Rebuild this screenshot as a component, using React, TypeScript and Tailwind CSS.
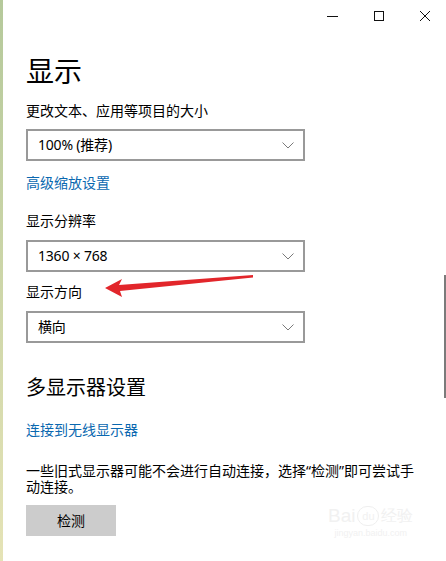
// Windows 10 设置 — 显示 page
const font = "font-['Noto_Sans','Noto_Sans_CJK_SC',sans-serif]";

function Chevron() {
  return (
    <svg width="12" height="7" viewBox="0 0 12 7" className="shrink-0">
      <path d="M0.5 0.5 L6 6 L11.5 0.5" fill="none" stroke="#7a7a7a" strokeWidth="1" />
    </svg>
  );
}

function Select({ value }: { value: string }) {
  return (
    <div className="flex h-[32px] w-[279px] items-center justify-between border-2 border-[#999999] bg-white pl-[10px] pr-[9px]">
      <span className="text-[14px] leading-[20px] tracking-[-0.2px] text-black">{value}</span>
      <Chevron />
    </div>
  );
}

function Label({ children, className = "" }: { children: string; className?: string }) {
  return <div className={`text-[14px] leading-[20px] text-black ${className}`}>{children}</div>;
}

function Link({ children, className = "" }: { children: string; className?: string }) {
  return <div className={`text-[14px] leading-[20px] text-[#0a68b0] ${className}`}>{children}</div>;
}

export default function App() {
  return (
    <div className={`relative flex h-[561px] w-[446px] overflow-hidden bg-white ${font}`}>
      {/* ─── desktop edge ─── */}
      <div className="w-[3px] shrink-0 bg-gradient-to-b from-[#b5c99b] to-[#e5e3b6]" />

      <div className="flex-1">
        {/* ─── Title bar ─── */}
        <div className="flex h-[32px] items-center justify-end gap-[36px] pr-[16px]">
          <svg width="11" height="10" viewBox="0 0 11 10">
            <path d="M0 5.5 H11" stroke="#111" strokeWidth="1" />
          </svg>
          <svg width="10" height="10" viewBox="0 0 10 10">
            <rect x="0.5" y="0.5" width="9" height="9" fill="none" stroke="#111" strokeWidth="1" />
          </svg>
          <svg width="10" height="10" viewBox="0 0 10 10">
            <path d="M0 0 L10 10 M10 0 L0 10" stroke="#111" strokeWidth="1" />
          </svg>
        </div>

        {/* ─── Content ─── */}
        <div className="pl-[23px]">
          <h1 className="mt-[21px] text-[28px] leading-[36px] text-black">显示</h1>

          <Label className="mt-[12px]">更改文本、应用等项目的大小</Label>
          <div className="mt-[8px]">
            <Select value="100% (推荐)" />
          </div>
          <Link className="mt-[12px]">高级缩放设置</Link>

          <Label className="mt-[18px]">显示分辨率</Label>
          <div className="mt-[9px]">
            <Select value="1360 × 768" />
          </div>

          <Label className="mt-[10px]">显示方向</Label>
          <div className="mt-[9px]">
            <Select value="横向" />
          </div>

          <h2 className="mt-[31px] text-[20px] leading-[28px] text-black">多显示器设置</h2>
          <Link className="mt-[18px]">连接到无线显示器</Link>

          <p className="mt-[23px] w-[396px] text-[14px] leading-[16px] text-black">
            一些旧式显示器可能不会进行自动连接，选择“检测”即可尝试手动连接。
          </p>
          <button className="mt-[10px] h-[31px] w-[90px] bg-[#cccccc] text-[14px] text-black">检测</button>
        </div>
      </div>

      {/* ─── red annotation arrow ─── */}
      <svg className="absolute left-0 top-0" width="446" height="561" viewBox="0 0 446 561">
        <polygon
          points="105,288 122,279 119,285 253,275 253,277.5 120,291 122,297"
          fill="#e2262b"
        />
      </svg>

      {/* ─── scrollbar ─── */}
      <div className="absolute right-0 top-[275px] h-[123px] w-[2px] bg-[#7b7b7b]" />

      {/* ─── watermark ─── */}
      <div className="absolute left-[328px] top-[506px] flex flex-col items-center text-[#f1f1f1]">
        <div className="flex items-end gap-[2px] font-['Liberation_Sans',sans-serif] text-[19px] leading-[20px]">
          <span>Bai</span>
          <span className="flex h-[20px] w-[22px] items-center justify-center rounded-full border border-[#efefef] text-[11px] leading-none">du</span>
          <span className="text-[16px]">经验</span>
        </div>
        <div className="mt-[2px] font-['Liberation_Sans',sans-serif] text-[9px] leading-[10px]">jingyan.baidu.com</div>
      </div>
    </div>
  );
}
